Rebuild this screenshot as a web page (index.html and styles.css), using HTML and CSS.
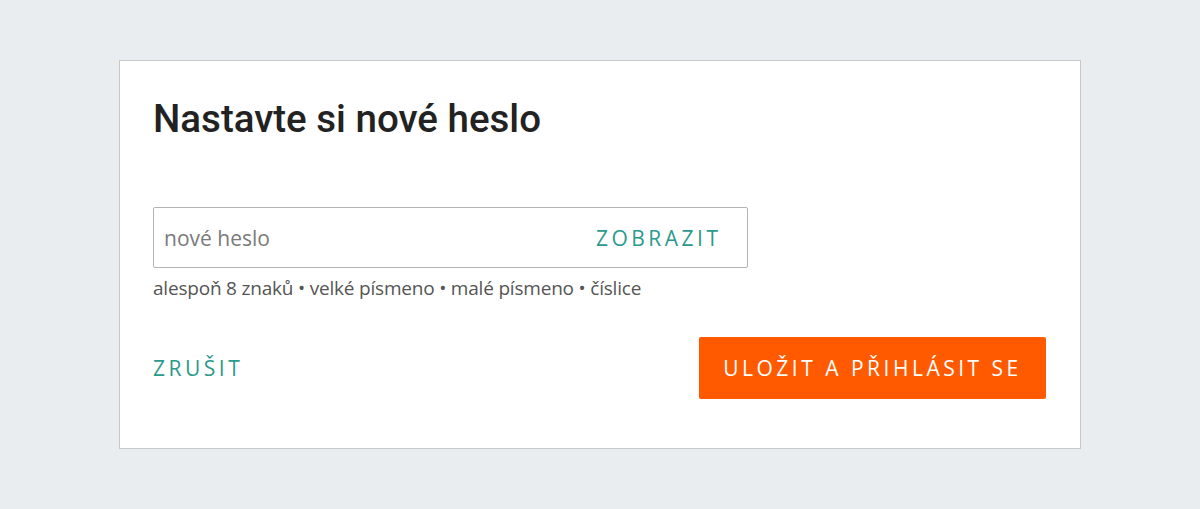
FILE: index.html
```html
<!DOCTYPE html>
<html lang="cs">
<head>
<meta charset="utf-8">
<title>Nastavte si nové heslo</title>
<link rel="stylesheet" href="styles.css">
</head>
<body>
<div class="page">
  <div class="card">
    <h1 class="title">Nastavte si nové heslo</h1>
    <div class="field">
      <div class="input">
        <span class="placeholder">nové heslo</span>
        <span class="show">ZOBRAZIT</span>
      </div>
      <div class="hint">alespoň 8 znaků • velké písmeno • malé písmeno • číslice</div>
    </div>
    <div class="actions">
      <span class="cancel">ZRUŠIT</span>
      <span class="submit">ULOŽIT A PŘIHLÁSIT SE</span>
    </div>
  </div>
</div>
</body>
</html>
```

FILE: styles.css
```css
html, body {
  margin: 0;
  padding: 0;
  background: #e9edf0;
  font-family: "Open Sans", "Liberation Sans", sans-serif;
}
.page {
  padding: 60px 119px;
  height: 509px;
  box-sizing: border-box;
}
.card {
  background: #fff;
  border: 1px solid #c6c8ca;
  height: 389px;
  box-sizing: border-box;
  padding: 34px 34px 0 33px;
}
.title {
  margin: 0;
  font-family: Roboto, "Liberation Sans", sans-serif;
  font-weight: 500;
  font-size: 38.5px;
  line-height: 48px;
  color: #222;
}
.field {
  margin-top: 64px;
  width: 595px;
}
.input {
  height: 61px;
  box-sizing: border-box;
  border: 1px solid #b4b4b4;
  border-radius: 2px;
  display: flex;
  align-items: center;
  justify-content: space-between;
  padding: 0 29px 0 10px;
}
.placeholder {
  font-size: 21px;
  color: #7a7a7a;
}
.show {
  font-size: 21px;
  color: #2a9a8c;
  letter-spacing: 3.5px;
  margin-right: -3.5px;
}
.hint {
  margin-top: 8px;
  font-size: 19px;
  color: #555;
  line-height: 24px;
  letter-spacing: -0.2px;
}
.actions {
  margin-top: 37px;
  display: flex;
  align-items: center;
  justify-content: space-between;
}
.cancel {
  font-size: 21px;
  color: #2a9a8c;
  letter-spacing: 3.5px;
}
.submit {
  background: #ff5a00;
  color: #fff;
  border-radius: 2px;
  height: 62px;
  width: 347px;
  box-sizing: border-box;
  display: flex;
  align-items: center;
  justify-content: center;
  font-size: 21px;
  letter-spacing: 3.5px;
}
```
